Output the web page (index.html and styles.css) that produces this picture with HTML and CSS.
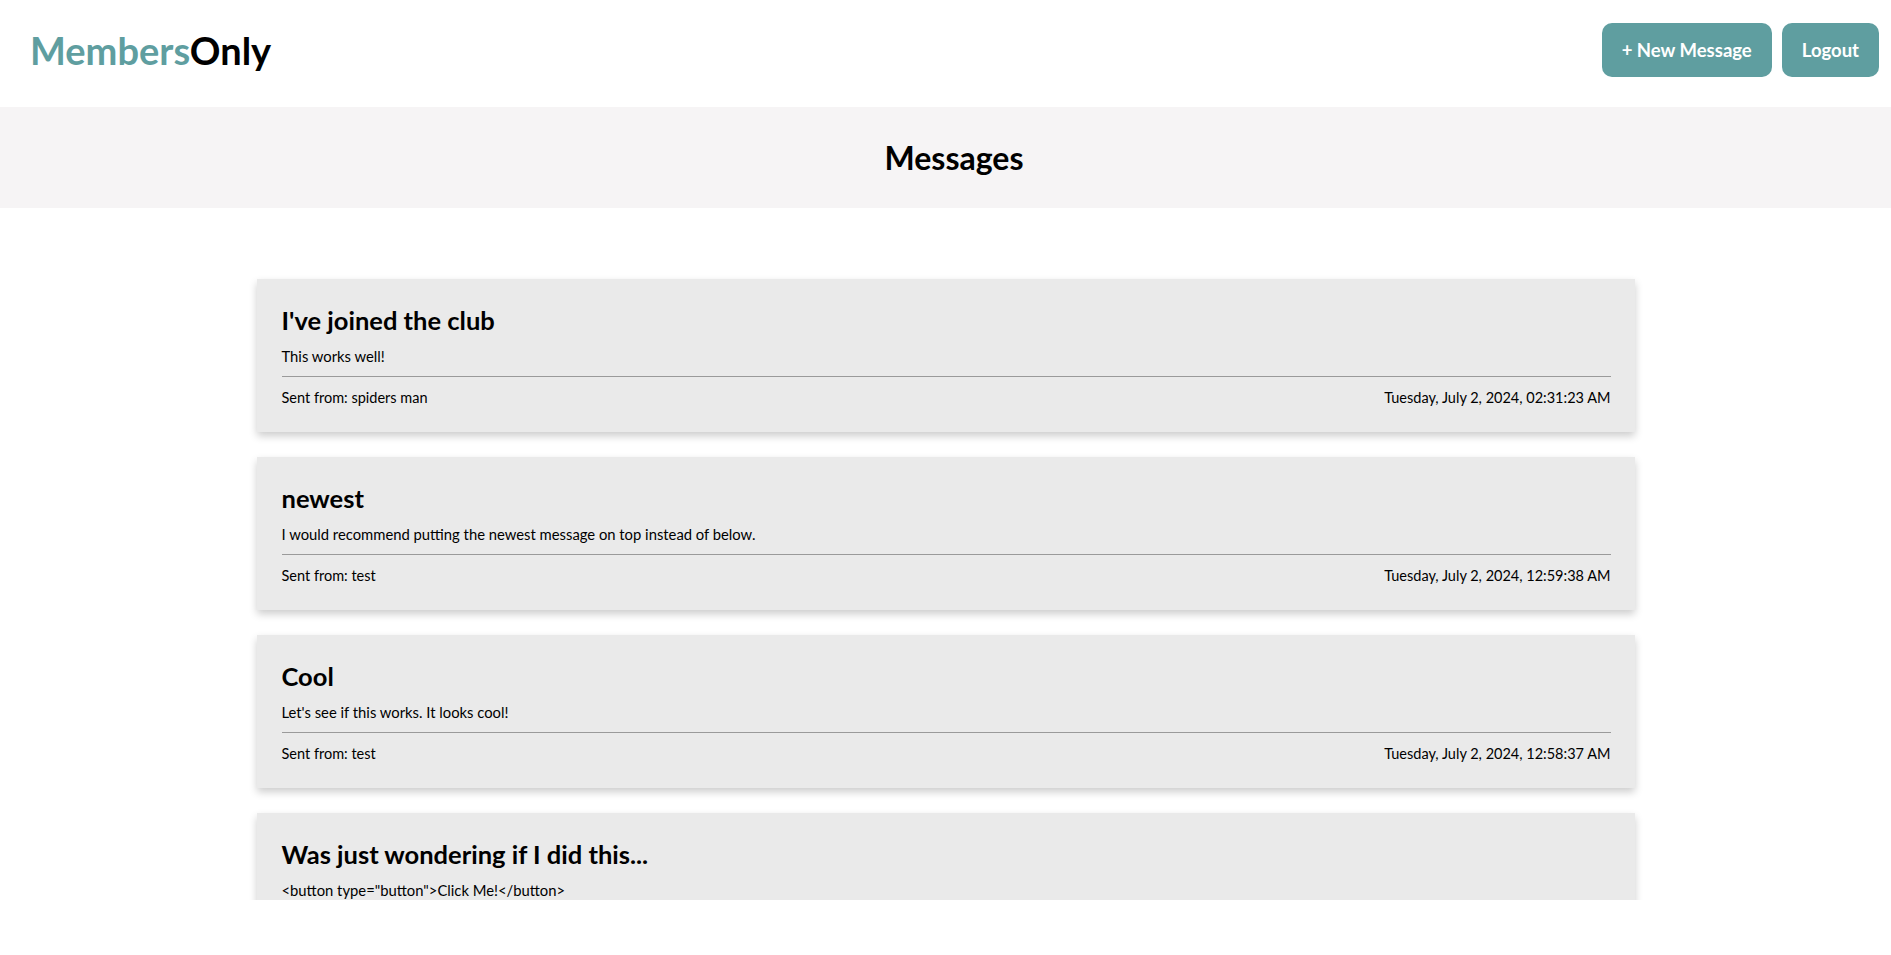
FILE: index.html
```html
<!DOCTYPE html>
<html lang="en">
<head>
<meta charset="utf-8">
<title>MembersOnly</title>
<link rel="stylesheet" href="styles.css">
</head>
<body>
<header class="topbar">
  <div class="logo"><span class="logo-accent">Members</span>Only</div>
  <nav class="actions">
    <button class="btn" type="button">+ New Message</button>
    <button class="btn" type="button">Logout</button>
  </nav>
</header>
<section class="banner">
  <h1 class="banner-title">Messages</h1>
</section>
<main class="feed">
  <article class="card">
    <h2 class="card-title">I've joined the club</h2>
    <p class="card-text">This works well!</p>
    <hr class="card-rule">
    <div class="card-meta"><span>Sent from: spiders man</span><span>Tuesday, July 2, 2024, 02:31:23 AM</span></div>
  </article>
  <article class="card">
    <h2 class="card-title">newest</h2>
    <p class="card-text">I would recommend putting the newest message on top instead of below.</p>
    <hr class="card-rule">
    <div class="card-meta"><span>Sent from: test</span><span>Tuesday, July 2, 2024, 12:59:38 AM</span></div>
  </article>
  <article class="card">
    <h2 class="card-title">Cool</h2>
    <p class="card-text">Let's see if this works. It looks cool!</p>
    <hr class="card-rule">
    <div class="card-meta"><span>Sent from: test</span><span>Tuesday, July 2, 2024, 12:58:37 AM</span></div>
  </article>
  <article class="card">
    <h2 class="card-title">Was just wondering if I did this...</h2>
    <p class="card-text">&lt;button type="button"&gt;Click Me!&lt;/button&gt;</p>
    <hr class="card-rule">
  </article>
</main>
</body>
</html>
```
FILE: styles.css
```css
* { box-sizing: border-box; }
html, body { margin: 0; padding: 0; }
body {
  font-family: Lato, "Open Sans", sans-serif;
  color: #000;
  background: #fff;
}
.topbar {
  display: flex;
  align-items: center;
  justify-content: space-between;
  padding: 23px 12px 30px 30px;
}
.logo {
  font-size: 38px;
  line-height: 38px;
  font-weight: 700;
  color: #000;
}
.logo-accent { color: #5f9ea0; }
.actions {
  display: flex;
  gap: 10px;
}
.btn {
  height: 54px;
  padding: 0 20px;
  border: none;
  border-radius: 10px;
  background: #5f9ea0;
  color: #fff;
  font-family: Lato, "Open Sans", sans-serif;
  font-size: 18.5px;
  font-weight: 700;
  cursor: pointer;
}
.banner {
  height: 101px;
  background: #f6f4f5;
  display: flex;
  align-items: center;
  justify-content: center;
  padding-left: 17px;
}
.banner-title {
  margin: 0;
  font-size: 32px;
  line-height: 32px;
  font-weight: 700;
}
.feed {
  height: 692px;
  overflow: hidden;
  padding: 71px 0 20px;
  display: flex;
  flex-direction: column;
  align-items: center;
  gap: 25px;
}
.card {
  width: 1378px;
  flex: none;
  background: #eaeaea;
  padding: 28px 24px 26px 25px;
  box-shadow: 0 4px 8px 0 rgba(0, 0, 0, 0.2);
}
.card-title {
  margin: 0 0 15px;
  font-size: 25.5px;
  line-height: 26px;
  font-weight: 700;
}
.card-text {
  margin: 0;
  font-size: 14.8px;
  line-height: 16px;
}
.card-rule {
  margin: 12px 0 0;
  border: none;
  height: 1px;
  background: #9a9a9a;
}
.card-meta {
  margin-top: 13px;
  display: flex;
  justify-content: space-between;
  font-size: 14.5px;
  line-height: 16px;
}
```
